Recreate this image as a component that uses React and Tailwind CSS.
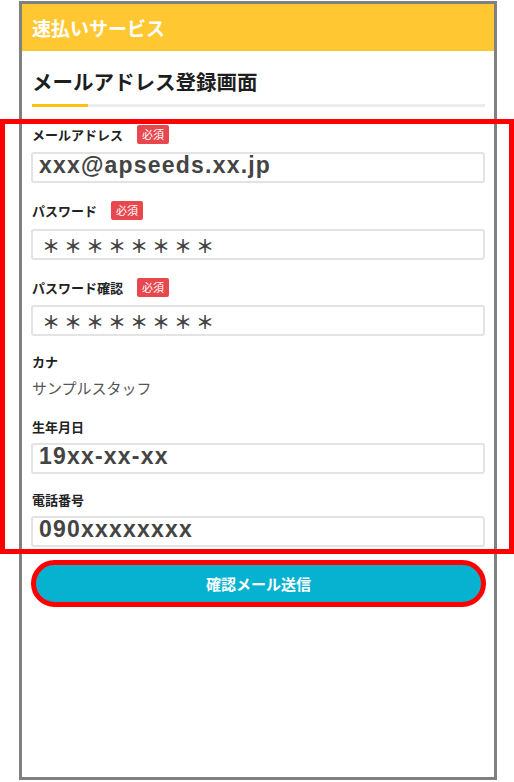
import React from "react";

const JP = { fontFamily: '"Noto Sans CJK JP", "Noto Sans", sans-serif' };
const LAT = { fontFamily: '"Liberation Sans", "Noto Sans CJK JP", sans-serif' };

function Badge() {
  return (
    <span
      className="ml-[14px] inline-flex h-[19px] items-center rounded-[2px] bg-[#e9474e] px-[5px] text-[11px] leading-none text-white"
      style={JP}
    >
      必須
    </span>
  );
}

function Label({ children, required, className = "" }) {
  return (
    <div className={"flex h-[20px] items-center " + className}>
      <span className="text-[13px] font-bold leading-none text-[#222]" style={JP}>
        {children}
      </span>
      {required && <Badge />}
    </div>
  );
}

function Field({ value, mask, className = "" }) {
  return (
    <div
      className={
        "flex h-[31px] rounded-[3px] border-2 border-[#e3e3e3] bg-white " +
        (mask ? "items-center pl-[9px] " : "items-start pl-[6px] ") +
        className
      }
    >
      {mask ? (
        <span className="text-[18px] font-bold leading-none tracking-[4px] text-[#444]" style={JP}>
          ＊＊＊＊＊＊＊＊
        </span>
      ) : (
        <span className="text-[23px] font-bold leading-[23px] tracking-[1.2px] text-[#444]" style={LAT}>
          {value}
        </span>
      )}
    </div>
  );
}

export default function App() {
  return (
    <div className="relative h-[782px] w-[514px] overflow-hidden bg-white">
      <div className="ml-[19px] mt-[1px] flex h-[779px] w-[478px] flex-col border-[3px] border-[#808080] bg-white">
        <div className="flex h-[47px] items-center bg-[#ffc833] pl-[10px]">
          <span className="text-[19px] font-bold leading-none text-white" style={JP}>
            速払いサービス
          </span>
        </div>
        <div className="flex flex-col px-[9px]">
          <div className="mt-[16px] pl-[1px] text-[20.5px] font-bold leading-[28px] text-[#1e1e1e]" style={JP}>
            メールアドレス登録画面
          </div>
          <div className="ml-[1px] mt-[9px] flex h-[3px] bg-[#e9edf0]">
            <div className="h-full w-[56px] bg-[#ffc10d]" />
          </div>

          <Label required className="mt-[17px] pl-[1px]">メールアドレス</Label>
          <Field className="mt-[8px]" value="xxx@apseeds.xx.jp" />

          <Label required className="mt-[17px] pl-[1px]">パスワード</Label>
          <Field className="mt-[9px]" mask />

          <Label required className="mt-[17px] pl-[1px]">パスワード確認</Label>
          <Field className="mt-[8px]" mask />

          <Label className="mt-[15px] pl-[1px]">カナ</Label>
          <div className="mt-[5px] pl-[1px] text-[15px] leading-[24px] text-[#555]" style={JP}>
            サンプルスタッフ
          </div>

          <Label className="mt-[16px] pl-[1px]">生年月日</Label>
          <Field className="mt-[7px]" value="19xx-xx-xx" />

          <Label className="mt-[15px] pl-[1px]">電話番号</Label>
          <Field className="mt-[7px]" value="090xxxxxxxx" />

          <button
            type="button"
            className="mt-[13px] flex h-[47px] w-[455px] items-center justify-center rounded-full border-[5px] border-[#ff0000] bg-[#07b2d1]"
          >
            <span className="text-[15px] font-bold leading-none text-white" style={JP}>
              確認メール送信
            </span>
          </button>
        </div>
      </div>
      <div className="pointer-events-none absolute left-0 top-[119px] h-[435px] w-[514px] border-[5px] border-[#ff0000]" />
    </div>
  );
}
